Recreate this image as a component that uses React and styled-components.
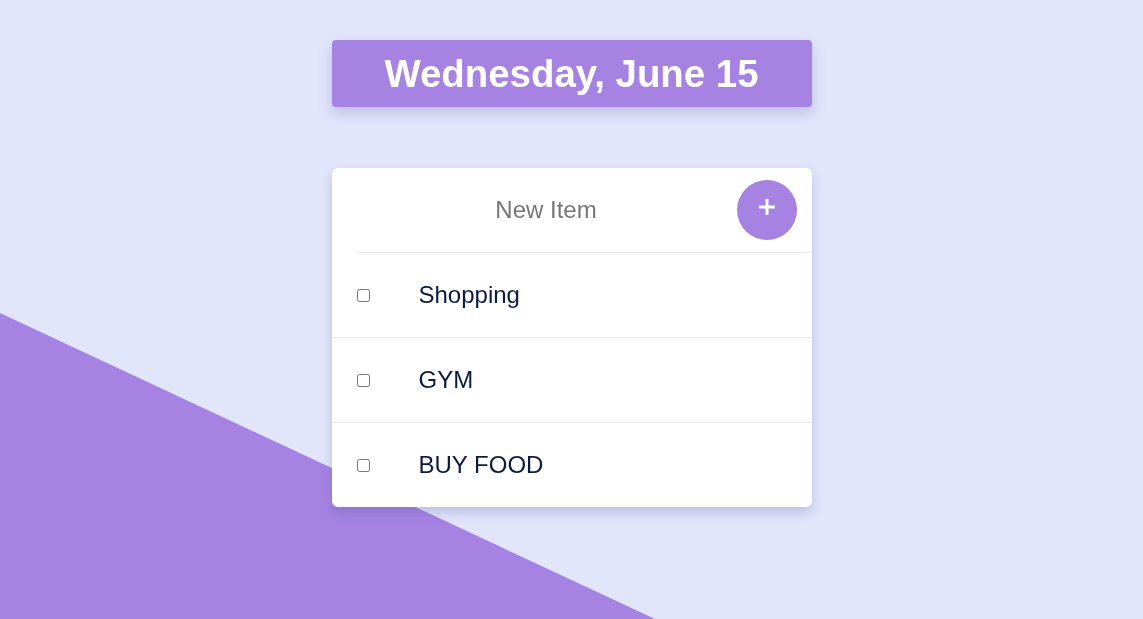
import React, { useState } from 'react';
import styled, { createGlobalStyle } from 'styled-components';

const font = `"Liberation Sans", Arial, Helvetica, sans-serif`;

const GlobalStyle = createGlobalStyle`
    *, *::before, *::after {
        box-sizing: border-box;
    }
    html, body {
        margin: 0;
        padding: 0;
        height: 100%;
    }
    body {
        background: #e1e6fb;
        font-family: ${font};
        overflow: hidden;
    }
`;

const Backdrop = styled.div`
    position: fixed;
    inset: 0;
    background: #a683e2;
    clip-path: polygon(0 313px, 655px 619px, 0 619px);
    z-index: 0;
`;

const Page = styled.div`
    position: relative;
    z-index: 1;
    display: flex;
    flex-direction: column;
    align-items: center;
    padding-top: 40px;
`;

const DateBox = styled.h1`
    width: 480px;
    height: 67px;
    margin: 0 0 61px;
    display: flex;
    align-items: center;
    justify-content: center;
    background: #a683e2;
    color: #fff;
    font-family: ${font};
    font-size: 38.4px;
    font-weight: 700;
    border-radius: 4px;
    box-shadow: 0 6px 14px rgba(80, 70, 160, 0.25);
`;

const Card = styled.div`
    width: 480px;
    background: #fff;
    border-radius: 6px;
    box-shadow: 0 6px 12px rgba(80, 80, 150, 0.25);
    overflow: hidden;
`;

const Form = styled.form`
    display: flex;
    align-items: center;
    height: 85px;
    margin-left: 24px;
    padding-right: 15px;
    border-bottom: 1px solid #ececf0;
`;

const Input = styled.input`
    flex: 1;
    min-width: 0;
    border: none;
    outline: none;
    text-align: center;
    font-family: ${font};
    font-size: 24px;
    color: #777;
    background: transparent;
    padding: 0;

    &::placeholder {
        color: #777;
    }
`;

const AddButton = styled.button`
    width: 60px;
    height: 60px;
    border-radius: 50%;
    border: none;
    background: #a683e2;
    color: #fff;
    display: flex;
    align-items: center;
    justify-content: center;
    padding: 0 0 6px;
    cursor: pointer;
`;

const Row = styled.div`
    display: flex;
    align-items: center;
    height: ${props => (props.first ? 84 : 85)}px;
    border-top: ${props => (props.first ? 'none' : '1px solid #ececf0')};
    padding-left: 25px;
`;

const Check = styled.input`
    margin: 0;
    width: 13px;
    height: 13px;
`;

const Label = styled.span`
    margin-left: 49px;
    font-family: ${font};
    font-size: 24px;
    color: #0c1a3d;
`;

const initialItems = ['Shopping', 'GYM', 'BUY FOOD'];

export default function App() {
    const [items, setItems] = useState(initialItems);
    const [text, setText] = useState('');

    const add = (e) => {
        e.preventDefault();
        if (!text.trim()) return;
        setItems([...items, text.trim()]);
        setText('');
    };

    return (
        <>
            <GlobalStyle />
            <Backdrop />
            <Page>
                <DateBox>Wednesday, June 15</DateBox>
                <Card>
                    <Form onSubmit={add}>
                        <Input
                            placeholder="New Item"
                            value={text}
                            onChange={(e) => setText(e.target.value)}
                        />
                        <AddButton type="submit">
                            <svg width="18" height="18" viewBox="0 0 18 18">
                                <path d="M9 1v16M1 9h16" stroke="#fff" strokeWidth="3" />
                            </svg>
                        </AddButton>
                    </Form>
                    {items.map((item, i) => (
                        <Row key={i} first={i === 0}>
                            <Check type="checkbox" />
                            <Label>{item}</Label>
                        </Row>
                    ))}
                </Card>
            </Page>
        </>
    );
}
